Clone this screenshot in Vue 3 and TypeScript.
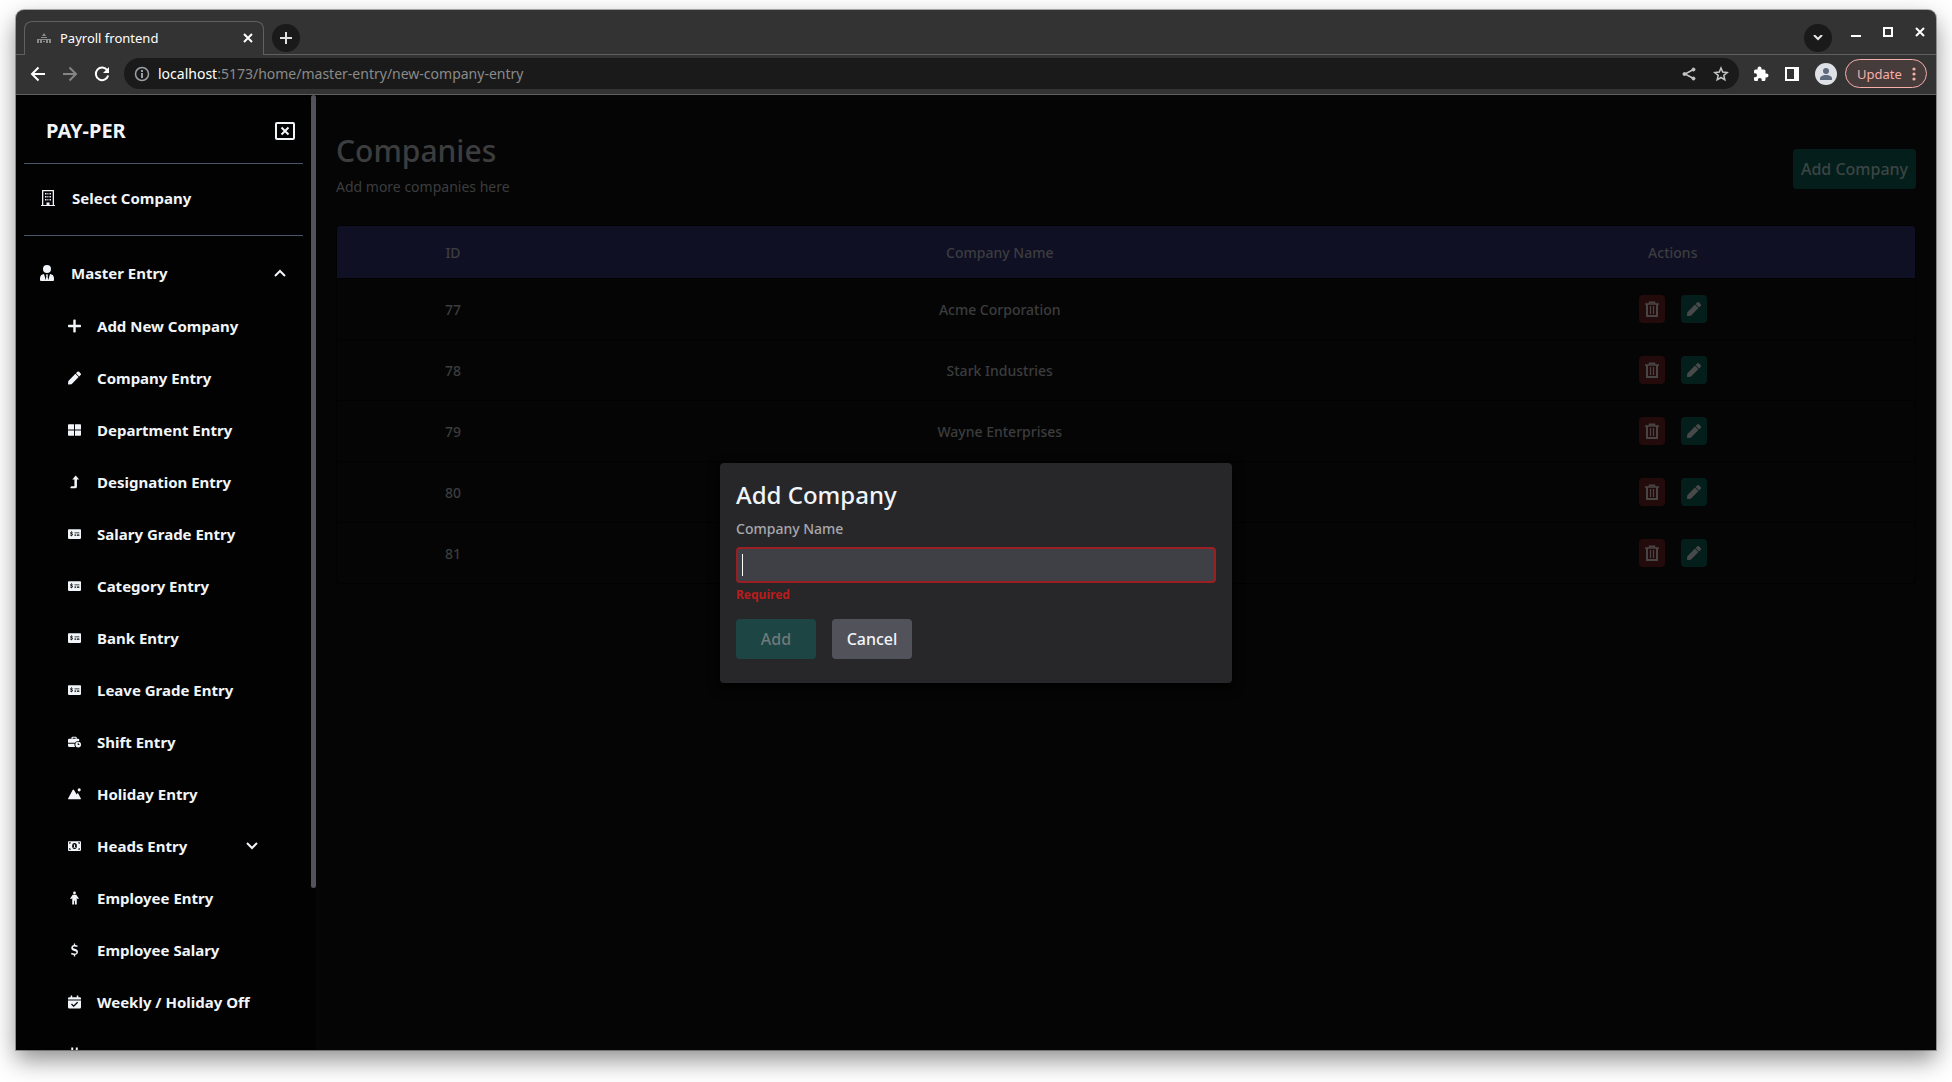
<script setup lang="ts">
import { onMounted, ref } from 'vue'

interface NavItem {
  label: string
  icon: string
  expandable?: boolean
}

interface Company {
  id: number
  name: string
}

const navItems: NavItem[] = [
  { label: 'Add New Company', icon: 'plus' },
  { label: 'Company Entry', icon: 'pen' },
  { label: 'Department Entry', icon: 'grid' },
  { label: 'Designation Entry', icon: 'level' },
  { label: 'Salary Grade Entry', icon: 'check' },
  { label: 'Category Entry', icon: 'check' },
  { label: 'Bank Entry', icon: 'check' },
  { label: 'Leave Grade Entry', icon: 'check' },
  { label: 'Shift Entry', icon: 'shift' },
  { label: 'Holiday Entry', icon: 'mountain' },
  { label: 'Heads Entry', icon: 'cash', expandable: true },
  { label: 'Employee Entry', icon: 'person' },
  { label: 'Employee Salary', icon: 'dollar' },
  { label: 'Weekly / Holiday Off', icon: 'calendar' },
  { label: '', icon: 'plug' },
]

const icons: Record<string, string> = {
  plus: 'M7.400 0h1.200a.9.9 0 0 1 .9.9v5.600h5.600a.9.9 0 0 1 .9.9v1.200a.9.9 0 0 1-.9.9H9.500v5.600a.9.9 0 0 1-.9.9H7.400a.9.9 0 0 1-.9-.9V9.500H.9a.9.9 0 0 1-.9-.9V7.400a.9.9 0 0 1 .9-.9h5.600V.9a.9.9 0 0 1 .9-.9z',
  pen: 'M9.090 2.910l4 4-8.690 8.690-3.570.4A.75.75 0 0 1 0 15.170l.4-3.570zM15.560 2.320l-1.880-1.880a1.500 1.500 0 0 0-2.120 0L9.790 2.210l4 4 1.770-1.770a1.500 1.500 0 0 0 0-2.120z',
  grid: 'M1 .8h6.400v6.600H0V1.800a1 1 0 0 1 1-1zM8.600.8H15a1 1 0 0 1 1 1v5.600H8.600zM0 8.600h7.400v6.600H1a1 1 0 0 1-1-1zM8.600 8.600H16v5.600a1 1 0 0 1-1 1H8.600z',
  level: 'M9.500 0l4.200 4.800h-2.700v8.700a2.300 2.300 0 0 1-2.300 2.300H3.500l-.8-.6 1.300-1.900h3.900V4.800H5.200z',
  check: 'M1 2h14a1 1 0 0 1 1 1v10a1 1 0 0 1-1 1H1a1 1 0 0 1-1-1V3a1 1 0 0 1 1-1zM3.900 4.500v.8C2.600 5.600 2.300 7.700 3.900 8.100c1.200.3 1 .9.300.9-.6 0-1-.3-1.300-.5l-.5.8c.4.4.9.600 1.500.7v.8h.8v-.8c1.600-.3 1.800-2.400.100-2.900-1.100-.3-.8-.9-.2-.9.400 0 .7.100 1 .3l.5-.8c-.4-.3-.8-.4-1.300-.5v-.7zM8 6v1h6V6zM8 8.500v1.500h2V8.500zM11 8.500v1.500h3V8.500z',
  shift: 'M5.500 1.500h4a1.200 1.200 0 0 1 1.200 1.200V4h1.800a1.300 1.300 0 0 1 1.300 1.300v1.500a5 5 0 0 0-5.300 2.200H0V5.300A1.300 1.300 0 0 1 1.300 4h3V2.700a1.200 1.200 0 0 1 1.200-1.200zM5.700 2.800V4h3.600V2.800zM0 10h8.100a5 5 0 0 0 .6 4.000H1.300A1.300 1.300 0 0 1 0 12.700zM12.600 7.700a3.500 3.500 0 1 1 0 7 3.500 3.500 0 0 1 0-7zM12 9v2.700h2.200v-1h-1.200V9z',
  mountain: 'M0 13.700L5.700 3.200a1 1 0 0 1 1.700 0l3.300 5.400 1.400-2.100L16 13.700a.8.8 0 0 1-.8.800H.8a.8.8 0 0 1-.8-.8zM13.800 1a1.900 1.900 0 1 1 0 3.800 1.900 1.900 0 0 1 0-3.800z',
  cash: 'M1 2h14a1 1 0 0 1 1 1v10a1 1 0 0 1-1 1H1a1 1 0 0 1-1-1V3a1 1 0 0 1 1-1zM1.500 3.500v2a2 2 0 0 0 2-2zM14.500 3.500h-2a2 2 0 0 0 2 2zM1.500 12.500h2a2 2 0 0 0-2-2zM14.500 12.500v-2a2 2 0 0 0-2 2zM8 4.300a2.900 3.700 0 1 0 0 7.400 2.900 3.700 0 0 0 0-7.400zM7.200 6h1.500v3.100h.7v.9H6.700v-.9h.7V7.100h-.7z',
  person: 'M8 0a1.700 1.700 0 1 1 0 3.400A1.700 1.700 0 0 1 8 0zM5.800 4h4.400l3.200 4.500-1.200 1.100-1.400-1.500V16H8.500v-4.700h-1V16H5.200V8.100L3.800 9.600 2.600 8.500z',
  dollar: 'M7.200 0h1.600v1.800c1.300.100 2.300.4 3.200.9l-.7 1.700c-1-.5-2-.8-3.200-.8-2.500 0-2.700 2-.7 2.600l2 .6c4.300 1.300 3.600 6.700-.6 7.300V16H7.200v-1.800c-1.500-.1-2.600-.5-3.500-1l.7-1.800c1 .6 2.200 1 3.600 1 2.800 0 3.100-2.300.8-3l-2-.6C2.700 7.700 3.300 2.500 7.200 1.900z',
  calendar: 'M3.300 0h1.900v2h5.600V0h1.900v2H14.500A1.500 1.500 0 0 1 16 3.500V5H0V3.500A1.500 1.500 0 0 1 1.500 2h1.800zM0 6h16v8.500a1.500 1.500 0 0 1-1.500 1.500h-13A1.500 1.500 0 0 1 0 14.500zM11.300 7.700L7 12l-2.100-2.100-1.200 1.200L7 14.300l5.500-5.400z',
  plug: 'M4 0h2.400v4H4zM9.600 0H12v4H9.600zM2 5h12v2h-1v2a5 5 0 0 1-4 4.500V16H7v-2.500A5 5 0 0 1 3 9V7H2z',
}

const companies: Company[] = [
  { id: 77, name: 'Acme Corporation' },
  { id: 78, name: 'Stark Industries' },
  { id: 79, name: 'Wayne Enterprises' },
  { id: 80, name: 'Umbrella Corporation' },
  { id: 81, name: 'Globex Corporation' },
]

const url = ref('/home/master-entry/new-company-entry')
const companyName = ref('')
const nameInput = ref<HTMLInputElement | null>(null)

onMounted(() => nameInput.value?.focus())
</script>

<template>
  <div class="desktop">
    <div class="window">
      <header class="tabstrip">
        <div class="tab">
          <svg class="favicon" viewBox="0 0 16 16" fill="#8b8b8b">
            <path d="M8 3l2 3H6zM5 7h6v1H5zM1 9h14v1H1zM1 10h2v3H1zM4 10h2v3H4zM7 11h2v1H7zM10 10h2v3h-2zM13 10h2v3h-2z" />
          </svg>
          <span class="tab-title">Payroll frontend</span>
          <button class="bare" aria-label="Close tab">
            <svg width="10" height="10" viewBox="0 0 10 10" stroke="#fff" stroke-width="2"><path d="M1 1l8 8M9 1l-8 8" /></svg>
          </button>
        </div>
        <button class="round" aria-label="New tab">
          <svg width="12" height="12" viewBox="0 0 12 12" stroke="#e0e0e0" stroke-width="2"><path d="M6 0v12M0 6h12" /></svg>
        </button>
        <span class="strip-space"></span>
        <button class="round search" aria-label="Search tabs">
          <svg width="10" height="6" viewBox="0 0 10 6" fill="none" stroke="#e8e8e8" stroke-width="2"><path d="M1 0l4 4 4-4" /></svg>
        </button>
        <div class="controls">
          <button class="bare" aria-label="Minimize">
            <svg width="10" height="10" viewBox="0 0 10 10"><path d="M0 8h10v2H0z" fill="#fff" /></svg>
          </button>
          <button class="bare" aria-label="Maximize">
            <svg width="10" height="10" viewBox="0 0 10 10" fill="none" stroke="#fff" stroke-width="2"><path d="M1 1h8v8H1z" /></svg>
          </button>
          <button class="bare" aria-label="Close window">
            <svg width="10" height="10" viewBox="0 0 10 10" stroke="#fff" stroke-width="2"><path d="M1 1l8 8M9 1l-8 8" /></svg>
          </button>
        </div>
      </header>

      <div class="toolbar">
        <div class="history">
          <button class="bare" aria-label="Back">
            <svg width="16" height="16" viewBox="0 0 16 16" fill="none" stroke="#fff" stroke-width="2"><path d="M15 8H2M8.500 1.500L2 8l6.500 6.500" /></svg>
          </button>
          <button class="bare" aria-label="Forward">
            <svg width="16" height="16" viewBox="0 0 16 16" fill="none" stroke="#858585" stroke-width="2"><path d="M1 8h13M7.500 1.500L14 8l-6.500 6.500" /></svg>
          </button>
          <button class="bare" aria-label="Reload">
            <svg width="16" height="16" viewBox="0 0 16 16" fill="none" stroke="#fff" stroke-width="2"><path d="M13.300 4.200A6.300 6.300 0 1 0 14.200 9.500" /><path d="M15 1v6H9z" fill="#fff" stroke="none" /></svg>
          </button>
        </div>
        <div class="address">
          <svg width="16" height="16" viewBox="0 0 16 16" fill="none" stroke="#9aa0a6" stroke-width="2"><circle cx="8" cy="8" r="6.500" stroke-width="1.500" /><path d="M8 7v5M8 4v2" /></svg>
          <span class="url"><span class="host">localhost</span>:5173{{ url }}</span>
          <button class="bare" aria-label="Share">
            <svg width="14" height="14" viewBox="0 0 14 14" fill="#c4c7c5" stroke="#c4c7c5"><path d="M11.500 2.500L3 7l8.500 4.500" fill="none" stroke-width="1.500" /><circle cx="11.500" cy="2.500" r="1.500" /><circle cx="2.500" cy="7" r="1.500" /><circle cx="11.500" cy="11.500" r="1.500" /></svg>
          </button>
          <button class="bare" aria-label="Bookmark">
            <svg width="16" height="16" viewBox="0 0 16 16" fill="none" stroke="#c4c7c5" stroke-width="1.500"><path d="M8 2l1.700 4.100 4.500.4-3.400 2.900 1 4.400L8 11.500l-3.800 2.300 1-4.400L1.800 6.500l4.500-.4z" /></svg>
          </button>
        </div>
        <div class="extras">
          <button class="bare" aria-label="Extensions">
            <svg width="16" height="16" viewBox="0 0 16 16" fill="#fff"><path d="M13.500 7.500h-1V5a1.500 1.500 0 0 0-1.500-1.500H8.500v-1a2 2 0 0 0-4 0v1H2.500A1.500 1.500 0 0 0 1 5v2.200h1a2 2 0 0 1 0 4.100H1v2.200A1.500 1.500 0 0 0 2.500 15h2.300v-1a2 2 0 0 1 4 0v1H11a1.500 1.500 0 0 0 1.500-1.500v-2h1a2 2 0 0 0 0-4z" /></svg>
          </button>
          <button class="bare" aria-label="Side panel">
            <svg width="14" height="14" viewBox="0 0 14 14"><path d="M0 0h14v14H0zM2 2v10h7V2z" fill="#fff" fill-rule="evenodd" /></svg>
          </button>
          <button class="bare" aria-label="Profile">
            <svg width="22" height="22" viewBox="0 0 22 22"><circle cx="11" cy="11" r="11" fill="#dee1e6" /><circle cx="11" cy="8" r="3" fill="#5f6a7d" /><path d="M5 17v-1.500c0-2 3-3.500 6-3.500s6 1.500 6 3.500V17z" fill="#5f6a7d" /></svg>
          </button>
        </div>
        <button class="update">
          <span>Update</span>
          <svg width="4" height="14" viewBox="0 0 4 14" fill="#f6aea9"><circle cx="2" cy="2" r="1.600" /><circle cx="2" cy="7" r="1.600" /><circle cx="2" cy="12" r="1.600" /></svg>
        </button>
      </div>

      <div class="page">
        <aside class="sidebar">
          <nav class="nav">
            <div class="brand">
              <strong>PAY-PER</strong>
              <button class="bare" aria-label="Close menu">
                <svg width="20" height="18" viewBox="0 0 20 18" fill="none" stroke="#f1f5f9"><rect x="1" y="1" width="18" height="16" rx="1" stroke-width="2" /><path d="M6.500 5.500l7 7M13.500 5.500l-7 7" stroke-width="2" /></svg>
              </button>
            </div>
            <div class="select">
              <a href="#">
                <svg width="16" height="16" viewBox="0 0 16 16"><path d="M2 0h12v15h1v1H1v-1h1zM3.300 1.300V15h3.200v-2.500h3V15h3.200V1.300zM5 3h1.500v1.500H5zM9.500 3H11v1.500H9.500zM5 6h1.500v1.500H5zM9.500 6H11v1.500H9.500zM5 9h1.500v1.500H5zM9.500 9H11v1.500H9.500zM7.400 3h1v1.500h-1zM7.400 6h1v1.500h-1zM7.400 9h1v1.500h-1z" fill="#f1f5f9" fill-rule="evenodd" /></svg>
                <span>Select Company</span>
              </a>
            </div>
            <a href="#" class="group">
              <svg width="16" height="16" viewBox="0 0 16 16" fill="#f1f5f9"><circle cx="8" cy="4" r="4" /><path d="M5 9l1.800 6.300.6-4.300-.6-1.500h2.400L8.600 11l.6 4.300L11 9c2.500.1 4 2 4 4.500v1.200c0 .8-.5 1.300-1.300 1.300H2.300C1.500 16 1 15.500 1 14.700v-1.200C1 11 2.500 9.100 5 9z" /></svg>
              <span class="grow">Master Entry</span>
              <svg width="12" height="8" viewBox="0 0 12 8" fill="none" stroke="#f1f5f9" stroke-width="2"><path d="M1 7l5-5 5 5" /></svg>
            </a>
            <ul class="items">
              <li v-for="item in navItems" :key="item.icon + item.label">
                <a href="#">
                  <svg width="13" height="14" viewBox="0 0 16 16"><path :d="icons[item.icon]" fill="#f1f5f9" fill-rule="evenodd" /></svg>
                  <span class="grow">{{ item.label }}</span>
                  <svg v-if="item.expandable" width="12" height="8" viewBox="0 0 12 8" fill="none" stroke="#f1f5f9" stroke-width="2"><path d="M1 1l5 5 5-5" /></svg>
                </a>
              </li>
            </ul>
          </nav>
          <div class="track"><div class="thumb"></div></div>
        </aside>

        <main class="content">
          <div class="heading">
            <div>
              <h1>Companies</h1>
              <p>Add more companies here</p>
            </div>
            <button class="add">Add Company</button>
          </div>
          <div class="table-box">
            <table>
              <colgroup>
                <col class="col-id" />
                <col class="col-name" />
                <col class="col-actions" />
              </colgroup>
              <thead>
                <tr><th>ID</th><th>Company Name</th><th>Actions</th></tr>
              </thead>
              <tbody>
                <tr v-for="company in companies" :key="company.id">
                  <td>{{ company.id }}</td>
                  <td>{{ company.name }}</td>
                  <td>
                    <div class="actions">
                      <button class="delete" aria-label="Delete">
                        <svg width="14" height="16" viewBox="0 0 14 16" fill="none" stroke="#4a4545"><path d="M0 3h14M4.500 3V1.200h5V3" stroke-width="1.500" /><path d="M2 3v12h10V3" stroke-width="2" /><path d="M5.500 5v8M8.500 5v8" stroke-width="1.200" /></svg>
                      </button>
                      <button class="edit" aria-label="Edit">
                        <svg width="14" height="14" viewBox="0 0 16 16" fill="#484a4a"><path :d="icons.pen" /></svg>
                      </button>
                    </div>
                  </td>
                </tr>
              </tbody>
            </table>
          </div>
        </main>

        <div class="overlay">
          <form class="modal" role="dialog" aria-label="Add Company" @submit.prevent>
            <h2>Add Company</h2>
            <label for="company-name">Company Name</label>
            <div class="field" :class="{ empty: !companyName }">
              <input id="company-name" ref="nameInput" v-model="companyName" type="text" autocomplete="off" />
            </div>
            <p class="error">Required</p>
            <div class="buttons">
              <button type="submit" class="submit" disabled>Add</button>
              <button type="button" class="cancel">Cancel</button>
            </div>
          </form>
        </div>
      </div>
    </div>
  </div>
</template>

<style>
body {
  background: #fff;
}
</style>

<style scoped>
* {
  box-sizing: border-box;
}

.desktop {
  display: flex;
  height: 100vh;
  padding: 10px 16px 32px;
  overflow: hidden;
  font-family: "Noto Sans", sans-serif;
  font-size: 14px;
}

button {
  border: 0;
  padding: 0;
  font-family: inherit;
  cursor: pointer;
}

svg {
  display: block;
  flex-shrink: 0;
}

a {
  color: inherit;
  text-decoration: none;
}

.window {
  display: flex;
  flex: 1;
  flex-direction: column;
  min-width: 0;
  border-radius: 8px 8px 0 0;
  background: #333;
  box-shadow: 0 0 0 1px rgba(0, 0, 0, 0.3), 0 10px 24px rgba(0, 0, 0, 0.45);
}

.bare {
  display: flex;
  align-items: center;
  justify-content: center;
  background: none;
}

.tabstrip {
  display: flex;
  align-items: center;
  height: 45px;
  padding: 11px 11px 0 8px;
  border-bottom: 1px solid #606060;
}

.tab {
  display: flex;
  align-items: center;
  gap: 8px;
  width: 240px;
  height: 34px;
  margin-bottom: -1px;
  padding: 0 10px 2px 11px;
  border: 1px solid #606060;
  border-bottom: 0;
  border-radius: 8px 8px 0 0;
  background: #333;
  color: #fff;
  font-size: 13px;
}

.favicon {
  width: 16px;
  height: 16px;
}

.tab-title {
  flex: 1;
}

.round {
  display: flex;
  align-items: center;
  justify-content: center;
  width: 28px;
  height: 28px;
  margin-left: 8px;
  border-radius: 50%;
  background: #1a1a1a;
}

.strip-space {
  flex: 1;
}

.search {
  margin-right: 19px;
}

.controls {
  display: flex;
  gap: 22px;
  padding-bottom: 11px;
}

.toolbar {
  display: flex;
  align-items: center;
  height: 40px;
  padding: 0 9px 2px 14px;
  border-bottom: 1px solid #606060;
}

.history {
  display: flex;
  gap: 16px;
  margin-right: 14px;
}

.address {
  display: flex;
  flex: 1;
  align-items: center;
  gap: 8px;
  height: 31px;
  padding: 0 10px;
  border-radius: 16px;
  background: #1a1a1a;
}

.url {
  flex: 1;
  color: #8a8a8a;
  font-size: 14px;
}

.address .bare {
  margin-left: 9px;
}

.host {
  color: #fff;
}

.extras {
  display: flex;
  align-items: center;
  gap: 16px;
  margin: 0 8px 0 14px;
}

.update {
  display: flex;
  align-items: center;
  justify-content: space-between;
  width: 82px;
  height: 29px;
  padding: 0 10px 0 11px;
  border: 1px solid #f6aea9;
  border-radius: 15px;
  background: #473c3c;
  color: #f6aea9;
  font-size: 13px;
}

.page {
  position: relative;
  display: flex;
  flex: 1;
  min-height: 0;
  background: #050505;
}

.sidebar {
  display: flex;
  width: 300px;
  overflow: hidden;
  background: #020202;
  color: #f1f5f9;
  font-size: 15px;
  font-weight: 700;
}

.nav {
  flex: 1;
  padding: 0 8px;
}

.brand {
  display: flex;
  align-items: center;
  justify-content: space-between;
  height: 69px;
  padding: 3px 8px 0 22px;
  border-bottom: 1px solid #475569;
}

.brand strong {
  font-size: 20px;
  font-weight: 700;
}

.select {
  height: 72px;
  padding: 16px;
  border-bottom: 1px solid #475569;
}

.select a,
.group {
  display: flex;
  align-items: center;
  gap: 16px;
  height: 36px;
}

.group {
  height: 40px;
  margin: 17px 17px 7px 15px;
}

.grow {
  flex: 1;
}

.items {
  margin: 0;
  padding: 0 45px 0 44px;
  list-style: none;
}

.items a {
  display: flex;
  align-items: center;
  gap: 16px;
  height: 52px;
}

.track {
  width: 5px;
}

.thumb {
  height: 83%;
  border-radius: 3px;
  background: #52525b;
}

.content {
  flex: 1;
  padding: 32px 20px;
  color: #3c3d3f;
}

.heading {
  display: flex;
  align-items: center;
  justify-content: space-between;
  margin-bottom: 28px;
}

h1 {
  margin: 0;
  font-size: 30px;
  font-weight: 500;
  line-height: 48px;
}

.heading p {
  margin: 2px 0 0;
  font-size: 14px;
  line-height: 20px;
}

.add {
  width: 123px;
  height: 40px;
  margin-top: 14px;
  border-radius: 4px;
  background: #041e1b;
  color: #3c4543;
  font-size: 16px;
  font-weight: 500;
}

.table-box {
  border: 1px solid #020202;
  border-radius: 4px;
  overflow: hidden;
}

table {
  width: 100%;
  table-layout: fixed;
  border-spacing: 0;
  text-align: center;
}

.col-id {
  width: 14.7%;
}

.col-name {
  width: 54.6%;
}

.col-actions {
  width: 30.7%;
}

th {
  height: 52px;
  padding: 0;
  background: #101024;
  font-weight: 500;
}

td {
  height: 61px;
  padding: 0;
  border-top: 1px solid #020202;
  font-weight: 500;
}

.actions {
  display: flex;
  justify-content: center;
  gap: 16px;
}

.delete,
.edit {
  display: flex;
  align-items: center;
  justify-content: center;
  width: 26px;
  height: 28px;
  border-radius: 4px;
}

.delete {
  background: #240b0b;
}

.edit {
  background: #041e1b;
}

.overlay {
  position: absolute;
  inset: 0;
  display: flex;
  align-items: center;
  justify-content: center;
}

.modal {
  display: flex;
  flex-direction: column;
  width: 512px;
  padding: 16px 16px 24px;
  border-radius: 4px;
  background: #27272a;
  box-shadow: 0 4px 12px #000;
}

h2 {
  margin: 0 0 8px;
  color: #f1f5f9;
  font-size: 24px;
  font-weight: 500;
  line-height: 32px;
}

label {
  margin-bottom: 8px;
  color: #a8a8ac;
  font-weight: 500;
  line-height: 20px;
}

.field {
  position: relative;
  display: flex;
}

/* Text cursor shown while the field is empty */
.field.empty::after {
  content: "";
  position: absolute;
  top: 7px;
  left: 6px;
  width: 1px;
  height: 22px;
  background: #fff;
}

.field.empty input {
  caret-color: transparent;
}

input {
  flex: 1;
  height: 36px;
  padding: 0 4px;
  border: 2px solid #991f22;
  border-radius: 4px;
  outline: 0;
  background: #3f3f46;
  color: #fff;
  font-family: inherit;
  font-size: 16px;
}

.error {
  margin: 4px 0 16px;
  color: #b91c1c;
  font-size: 12px;
  font-weight: 700;
  line-height: 16px;
}

.buttons {
  display: flex;
  gap: 16px;
}

.buttons button {
  width: 80px;
  height: 40px;
  border-radius: 4px;
  font-size: 16px;
  font-weight: 500;
}

.submit {
  background: #1d4543;
  color: #71787a;
}

.cancel {
  background: #52525b;
  color: #f1f5f9;
}
</style>
